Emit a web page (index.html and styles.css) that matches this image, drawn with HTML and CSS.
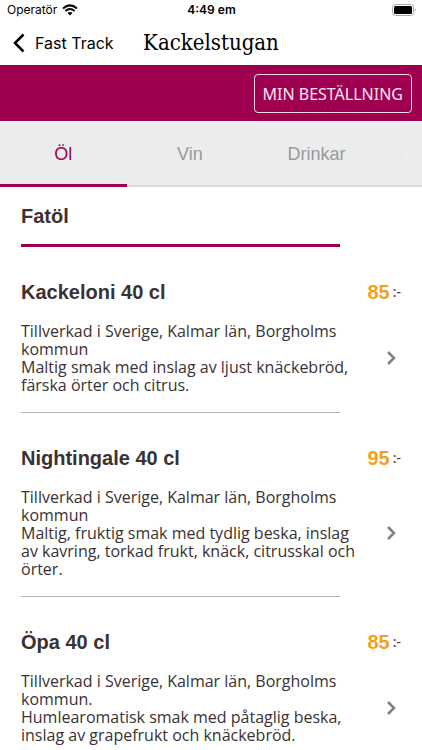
FILE: index.html
```html
<!DOCTYPE html>
<html lang="sv">
<head>
<meta charset="utf-8">
<meta name="viewport" content="width=device-width, initial-scale=1">
<title>Kackelstugan</title>
<link rel="stylesheet" href="styles.css">
</head>
<body>
<div class="status">
  <div class="carrier">
    <span>Operatör</span>
    <svg class="wifi" viewBox="0 0 16 12" aria-hidden="true">
      <path d="M1 4.4Q8-1.6 15 4.4M3.4 7Q8 3 12.6 7" fill="none" stroke="#000" stroke-width="2"/>
      <path d="M5.5 8.9Q8 7 10.500 8.900L8 11.500Z"/>
    </svg>
  </div>
  <time class="time">4:49 em</time>
  <svg class="battery" viewBox="0 0 24 12" aria-hidden="true">
    <rect x=".5" y=".5" width="21" height="11" rx="3" fill="none" stroke="#aaa"/>
    <rect x="2" y="2" width="18" height="8" rx="1.500"/>
    <path d="M22.800 4.200Q24.500 6 22.800 7.800Z" fill="#888"/>
  </svg>
</div>
<header class="nav">
  <a class="back" href="#">
    <svg class="back-icon" viewBox="0 0 12 20" aria-hidden="true"><path d="M10.500 1.500 2 10l8.500 8.500"/></svg>
    <span>Fast Track</span>
  </a>
  <h1 class="title">Kackelstugan</h1>
</header>
<div class="banner"><button class="order" type="button">MIN BESTÄLLNING</button></div>
<nav class="tabs">
  <a class="tab active" href="#">Öl</a>
  <a class="tab" href="#">Vin</a>
  <a class="tab" href="#">Drinkar</a>
  <svg class="more" viewBox="0 0 6 10" aria-hidden="true"><path d="m1 1 4 4-4 4"/></svg>
</nav>
<main class="menu">
  <h2 class="category">Fatöl</h2>
  <article class="item">
    <h3 class="name">Kackeloni 40 cl</h3>
    <p class="price"><b class="amount">85</b>:-</p>
    <p class="text">Tillverkad i Sverige, Kalmar län, Borgholms<br>kommun<br>Maltig smak med inslag av ljust knäckebröd,<br>färska örter och citrus.</p>
    <svg class="arrow" viewBox="0 0 10 14" aria-hidden="true"><path d="m2 1 6 6-6 6"/></svg>
  </article>
  <article class="item">
    <h3 class="name">Nightingale 40 cl</h3>
    <p class="price"><b class="amount">95</b>:-</p>
    <p class="text">Tillverkad i Sverige, Kalmar län, Borgholms<br>kommun<br>Maltig, fruktig smak med tydlig beska, inslag<br>av kavring, torkad frukt, knäck, citrusskal och<br>örter.</p>
    <svg class="arrow" viewBox="0 0 10 14" aria-hidden="true"><path d="m2 1 6 6-6 6"/></svg>
  </article>
  <article class="item">
    <h3 class="name">Öpa 40 cl</h3>
    <p class="price"><b class="amount">85</b>:-</p>
    <p class="text">Tillverkad i Sverige, Kalmar län, Borgholms<br>kommun.<br>Humlearomatisk smak med påtaglig beska,<br>inslag av grapefrukt och knäckebröd.</p>
    <svg class="arrow" viewBox="0 0 10 14" aria-hidden="true"><path d="m2 1 6 6-6 6"/></svg>
  </article>
</main>
</body>
</html>
```
FILE: styles.css
```css
* { box-sizing: border-box; }
html { overflow-x: hidden; scrollbar-width: none; }
body {
  margin: 0;
  background: #fff;
  color: #3a3133;
  font-family: "Liberation Sans", Arial, sans-serif;
}
h1, h2, h3, p { margin: 0; }
a { text-decoration: none; color: inherit; }
.status {
  display: grid;
  grid-template-columns: 1fr auto 1fr;
  align-items: center;
  height: 20px;
  padding: 0 6px 0 7px;
  color: #000;
  font: 12px/20px Inter, sans-serif;
}
.carrier { display: flex; align-items: center; gap: 5px; }
.wifi { width: 16px; height: 12px; }
.time { font-weight: 600; }
.battery { width: 24px; height: 12px; justify-self: end; }
.nav {
  display: grid;
  grid-template-columns: 1fr auto 1fr;
  align-items: center;
  height: 45px;
  padding: 0 13px;
  color: #000;
}
.back {
  display: flex;
  align-items: center;
  gap: 10px;
  font: 16px/20px Inter, sans-serif;
}
.back-icon { width: 12px; height: 20px; fill: none; stroke: #000; stroke-width: 2.500; }
.title { font: 22px/28px "DejaVu Serif Condensed", "DejaVu Serif", serif; }
.banner {
  display: flex;
  justify-content: flex-end;
  padding: 9px 10px 8px;
  background: #9e004f;
}
.order {
  height: 39px;
  padding: 0 8px;
  border: 1px solid #f3d9e6;
  border-radius: 4px;
  background: transparent;
  color: #fbe6f0;
  font: 16px/20px "Noto Sans", sans-serif;
}
.tabs {
  display: grid;
  grid-template-columns: 3fr 3fr 3fr 1fr;
  height: 66px;
  background: #ebecee;
  box-shadow: inset 0 -2px #dcdcde;
  color: #999;
  font-size: 18px;
}
.tab {
  display: flex;
  align-items: center;
  justify-content: center;
  border-bottom: 3px solid transparent;
  padding-top: 4px;
}
.active { color: #9e004f; border-color: #9e004f; }
.more {
  width: 6px;
  height: 10px;
  align-self: center;
  justify-self: center;
  fill: none;
  stroke: #e2e3e5;
}
.menu { padding: 16px 21px 0; }
.category {
  width: 84%;
  padding-bottom: 15px;
  border-bottom: 3px solid #9e004f;
  font-size: 20px;
  line-height: 26px;
}
.item {
  position: relative;
  display: grid;
  grid-template-columns: 1fr 40px;
  row-gap: 18px;
  align-items: center;
  padding: 33px 0 19px;
}
.item::after {
  content: "";
  position: absolute;
  bottom: 0;
  left: 0;
  width: 84%;
  border-bottom: 1px solid #b5b2b3;
}
.name { font-size: 20px; line-height: 24px; }
.price {
  display: flex;
  justify-content: flex-end;
  align-items: center;
  gap: 3px;
  font: 14px/24px "Noto Sans", sans-serif;
}
.amount { color: #f3a11b; font: bold 20px/24px "Liberation Sans", sans-serif; }
.text { font: 16px/18px "Open Sans", sans-serif; white-space: nowrap; }
.arrow {
  width: 10px;
  height: 14px;
  margin-right: 5px;
  justify-self: end;
  fill: none;
  stroke: #808080;
  stroke-width: 2.500;
}
```
